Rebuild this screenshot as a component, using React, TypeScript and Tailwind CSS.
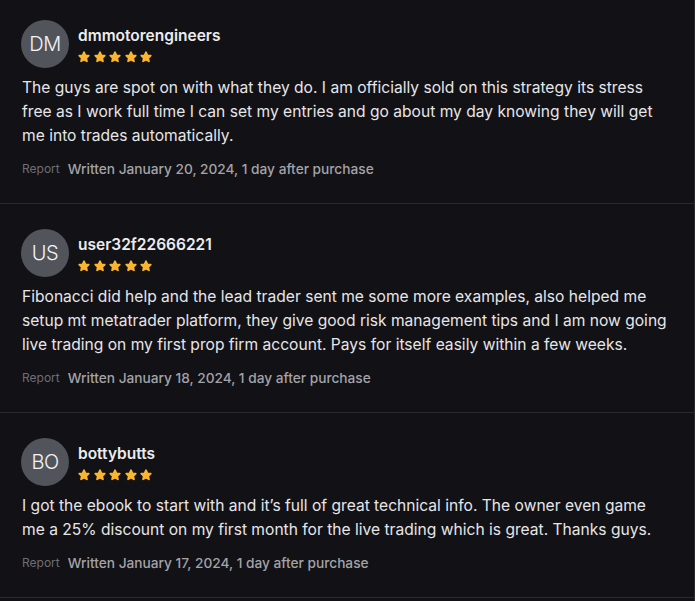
import React from 'react'

interface Review {
  id: string
  initials: string
  name: string
  body: string
  date: string
}

const reviews: Review[] = [
  {
    id: '1',
    initials: 'DM',
    name: 'dmmotorengineers',
    body: 'The guys are spot on with what they do. I am officially sold on this strategy its stress free as I work full time I can set my entries and go about my day knowing they will get me into trades automatically.',
    date: 'Written January 20, 2024, 1 day after purchase',
  },
  {
    id: '2',
    initials: 'US',
    name: 'user32f22666221',
    body: 'Fibonacci did help and the lead trader sent me some more examples, also helped me setup mt metatrader platform, they give good risk management tips and I am now going live trading on my first prop firm account. Pays for itself easily within a few weeks.',
    date: 'Written January 18, 2024, 1 day after purchase',
  },
  {
    id: '3',
    initials: 'BO',
    name: 'bottybutts',
    body: 'I got the ebook to start with and it\u2019s full of great technical info. The owner even game me a 25% discount on my first month for the live trading which is great. Thanks guys.',
    date: 'Written January 17, 2024, 1 day after purchase',
  },
]

function Star() {
  return (
    <svg viewBox="0 0 24 24" className="w-[12px] h-[12px]" fill="#fbb52e" stroke="#fbb52e" strokeWidth="3.5" strokeLinejoin="round">
      <path d="M12 2.5l2.9 6.1 6.6.8-4.9 4.6 1.3 6.6L12 17.3l-5.9 3.3 1.3-6.6-4.9-4.6 6.6-.8z" />
    </svg>
  )
}

function ReviewItem({ review, first }: { review: Review; first: boolean }) {
  return (
    <div className={`${first ? 'pt-5' : 'pt-[25px]'} pb-6 px-[22px] border-b border-[#2a292e]`}>
      <div className="flex items-center gap-[9px] -ml-px">
        <div className="w-12 h-12 rounded-full bg-[#52545c] flex items-center justify-center shrink-0">
          <span className="text-[20px] font-light text-[#f4f4f5] tracking-tight">{review.initials}</span>
        </div>
        <div className="flex flex-col">
          <span className="text-[15.5px] leading-5 font-semibold text-[#ececee]">{review.name}</span>
          <div className="flex items-center gap-[3.5px] mt-[5px]">
            {[0, 1, 2, 3, 4].map((i) => (
              <Star key={i} />
            ))}
          </div>
        </div>
      </div>
      <p className="mt-2 text-[15.6px] leading-6 text-[#e6e6e9]">{review.body}</p>
      <div className="mt-[11px] flex items-center gap-2 leading-5">
        <span className="text-[12px] text-[#6e6e74]">Report</span>
        <span className="text-[13.7px] font-medium text-[#a3a3a8]">{review.date}</span>
      </div>
    </div>
  )
}

export default function App() {
  return (
    <div className="min-h-screen bg-[#121115]" style={{ fontFamily: 'Inter, "Noto Sans", sans-serif' }}>
      <div className="border-r border-[#2a292e] min-h-screen">
        {reviews.map((review, i) => (
          <ReviewItem key={review.id} review={review} first={i === 0} />
        ))}
      </div>
    </div>
  )
}
